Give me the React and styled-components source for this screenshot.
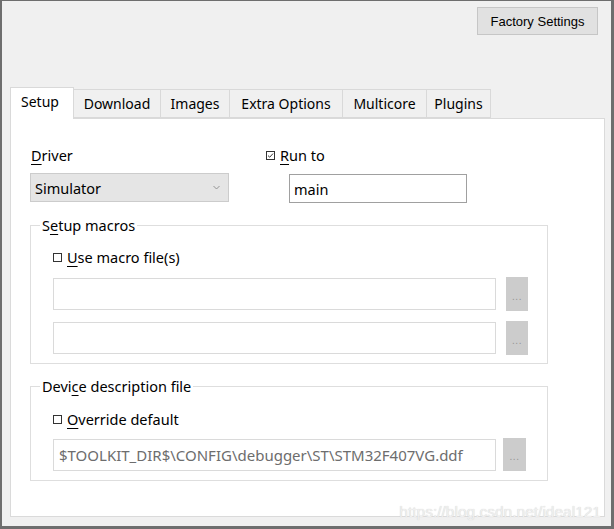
import React from 'react';
import styled, { createGlobalStyle } from 'styled-components';

const GlobalStyle = createGlobalStyle`
  body {
    margin: 0;
    background: #f0f0f0;
    font-family: "Noto Sans", "Open Sans", sans-serif;
    color: #000;
  }
`;

const Frame = styled.div`
  position: relative;
  width: 614px;
  height: 529px;
  box-sizing: border-box;
  border-style: solid;
  border-color: #6e6e6e;
  border-width: 1px 3px 3px 2px;
  background: #f0f0f0;
  display: flex;
  flex-direction: column;
  overflow: hidden;
`;

const Header = styled.div`
  display: flex;
  justify-content: flex-end;
  padding: 6px 13px 0 0;
`;

const FactoryButton = styled.button`
  width: 121px;
  height: 28px;
  box-sizing: border-box;
  background: #e1e1e1;
  border: 1px solid #c6c6c6;
  font-family: "Liberation Sans", Arial, sans-serif;
  font-size: 13px;
  color: #000;
  padding: 0;
`;

const TabStrip = styled.div`
  display: flex;
  align-items: flex-end;
  margin: 52px 0 0 8px;
  height: 31px;
`;

const Tab = styled.div`
  position: relative;
  z-index: ${({ active }) => (active ? 2 : 1)};
  width: ${({ w }) => w}px;
  height: ${({ active }) => (active ? 32 : 29)}px;
  margin-bottom: ${({ active }) => (active ? -1 : 0)}px;
  box-sizing: border-box;
  display: flex;
  align-items: center;
  justify-content: ${({ active }) => (active ? 'flex-start' : 'center')};
  padding-left: ${({ active }) => (active ? 10 : 0)}px;
  padding-bottom: ${({ active }) => (active ? 3 : 0)}px;
  background: ${({ active }) => (active ? '#fff' : '#f0f0f0')};
  border: 1px solid #d9d9d9;
  border-bottom: ${({ active }) => (active ? 'none' : '1px solid #d9d9d9')};
  border-left-width: ${({ first }) => (first ? 1 : 0)}px;
  font-size: 14px;
  line-height: 20px;
`;

const Panel = styled.div`
  flex: 1;
  margin: 0 6px 9px 8px;
  background: #fff;
  border: 1px solid #dadada;
  padding: 26px 0 0 19px;
  box-sizing: border-box;
  font-size: 14.5px;
`;

const TopRow = styled.div`
  display: flex;
  gap: 37px;
`;

const Column = styled.div`
  display: flex;
  flex-direction: column;
  width: ${({ w }) => w}px;
`;

const Label = styled.div`
  line-height: 20px;
  padding-left: 1px;
`;

const Key = styled.u`
  text-underline-offset: 3px;
  text-decoration-thickness: 1px;
`;

const Select = styled.div`
  margin-top: 8px;
  height: 29px;
  box-sizing: border-box;
  background: #e5e5e5;
  border: 1px solid #cccccc;
  display: flex;
  align-items: center;
  justify-content: space-between;
  padding: 0 8px 0 4px;
`;

const CheckRow = styled.label`
  display: flex;
  align-items: center;
  gap: 5px;
  line-height: 20px;
`;

const TextInput = styled.div`
  margin: 9px 0 0 23px;
  width: 178px;
  height: 29px;
  box-sizing: border-box;
  border: 1px solid #a0a0a0;
  background: #fff;
  display: flex;
  align-items: center;
  padding-left: 4px;
`;

const Group = styled.fieldset`
  width: 518px;
  box-sizing: border-box;
  margin: ${({ top }) => top}px 0 0 0;
  padding: 0;
  border: 1px solid #dedede;
  min-inline-size: 0;
`;

const Legend = styled.legend`
  margin-left: 9px;
  padding: 0 2px;
  line-height: 20px;
`;

const GroupBody = styled.div`
  padding: ${({ pt }) => pt}px 0 ${({ pb }) => pb}px 22px;
`;

const FileRow = styled.div`
  display: flex;
  align-items: center;
  gap: ${({ gap }) => gap}px;
  margin-top: ${({ top }) => top}px;
`;

const FileInput = styled.div`
  width: 443px;
  height: 32px;
  box-sizing: border-box;
  border: 1px solid #dadada;
  background: #fff;
  display: flex;
  align-items: center;
  padding-left: 5px;
  font-size: 15px;
  color: #6d6d6d;
  white-space: nowrap;
`;

const BrowseButton = styled.div`
  width: ${({ w }) => w}px;
  height: ${({ h }) => h}px;
  background: #cccccc;
  color: #959595;
  font-family: "Liberation Sans", Arial, sans-serif;
  font-size: 10px;
  display: flex;
  align-items: center;
  justify-content: center;
  padding-top: 4px;
  box-sizing: border-box;
  letter-spacing: 0.5px;
`;

const Watermark = styled.div`
  position: absolute;
  right: 10px;
  bottom: 5px;
  font-family: "Liberation Sans", Arial, sans-serif;
  font-size: 15.5px;
  color: #efefef;
  text-shadow: 0 0 1px #cacaca;
`;

const CheckBox = ({ checked }) => (
  <svg width="9" height="9" viewBox="0 0 9 9">
    <rect x="0.5" y="0.5" width="8" height="8" fill="#fff" stroke="#333" />
    {checked && (
      <path d="M2 4.6 L3.7 6.2 L7 2.6" fill="none" stroke="#333" strokeWidth="1" />
    )}
  </svg>
);

const Chevron = () => (
  <svg width="7" height="5" viewBox="0 0 7 5">
    <path d="M0.5 1 L3.5 4 L6.5 1" fill="none" stroke="#8a8a8a" strokeWidth="0.9" />
  </svg>
);

const tabs = [
  { name: 'Setup', w: 64 },
  { name: 'Download', w: 87 },
  { name: 'Images', w: 69 },
  { name: 'Extra Options', w: 113 },
  { name: 'Multicore', w: 84 },
  { name: 'Plugins', w: 64 },
];

const App = () => (
  <>
    <GlobalStyle />
    <Frame>
      <Header>
        <FactoryButton>Factory Settings</FactoryButton>
      </Header>
      <TabStrip>
        {tabs.map((t, i) => (
          <Tab key={t.name} w={t.w} active={i === 0} first={i === 0}>
            {t.name}
          </Tab>
        ))}
      </TabStrip>
      <Panel>
        <TopRow>
          <Column w={199}>
            <Label>
              <Key>D</Key>river
            </Label>
            <Select>
              <span>Simulator</span>
              <Chevron />
            </Select>
          </Column>
          <Column w={201}>
            <CheckRow>
              <CheckBox checked />
              <span>
                <Key>R</Key>un to
              </span>
            </CheckRow>
            <TextInput>main</TextInput>
          </Column>
        </TopRow>

        <Group top={12}>
          <Legend>
            S<Key>e</Key>tup macros
          </Legend>
          <GroupBody pt={12} pb={8}>
            <CheckRow>
              <CheckBox />
              <span>
                <Key>U</Key>se macro file(s)
              </span>
            </CheckRow>
            <FileRow gap={10} top={10}>
              <FileInput />
              <BrowseButton w={22} h={34}>...</BrowseButton>
            </FileRow>
            <FileRow gap={10} top={10}>
              <FileInput />
              <BrowseButton w={22} h={34}>...</BrowseButton>
            </FileRow>
          </GroupBody>
        </Group>

        <Group top={12}>
          <Legend>
            Devi<Key>c</Key>e description file
          </Legend>
          <GroupBody pt={13} pb={9}>
            <CheckRow>
              <CheckBox />
              <span>
                <Key>O</Key>verride default
              </span>
            </CheckRow>
            <FileRow gap={7} top={9}>
              <FileInput>$TOOLKIT_DIR$\CONFIG\debugger\ST\STM32F407VG.ddf</FileInput>
              <BrowseButton w={23} h={33}>...</BrowseButton>
            </FileRow>
          </GroupBody>
        </Group>
      </Panel>
      <Watermark>https://blog.csdn.net/ideal121</Watermark>
    </Frame>
  </>
);

export default App;
